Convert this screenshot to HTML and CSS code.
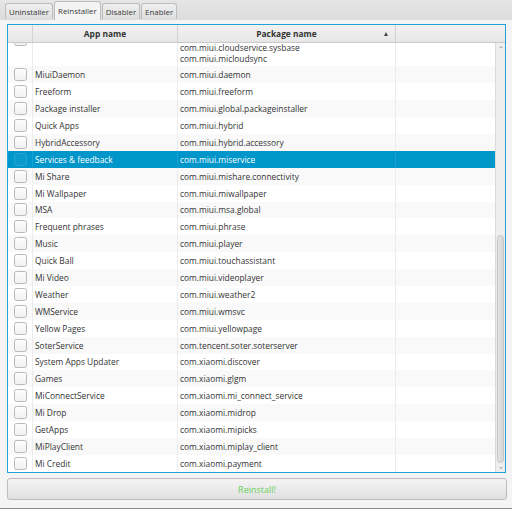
FILE: index.html
```html
<!DOCTYPE html>
<html lang="en">
<head>
<meta charset="utf-8">
<title>App Manager</title>
<link rel="stylesheet" href="styles.css">
</head>
<body>
<div class="tabbar">
  <div class="tab">Uninstaller</div>
  <div class="tab selected">Reinstaller</div>
  <div class="tab">Disabler</div>
  <div class="tab">Enabler</div>
</div>
<div class="content">
  <div class="table">
    <div class="thead">
      <div class="th"></div>
      <div class="th">App name</div>
      <div class="th sorted">Package name<span class="arrow"></span></div>
      <div class="th last"></div>
    </div>
    <div class="tbody">
      <div class="rows">
        <div class="row partial"><div class="cell chk"><span class="box"></span></div><div class="cell"></div><div class="cell pkg">com.miui.cloudservice.sysbase<br>com.miui.micloudsync</div><div class="cell"></div></div>
        <div class="row odd"><div class="cell chk"><span class="box"></span></div><div class="cell">MiuiDaemon</div><div class="cell">com.miui.daemon</div><div class="cell"></div></div>
        <div class="row"><div class="cell chk"><span class="box"></span></div><div class="cell">Freeform</div><div class="cell">com.miui.freeform</div><div class="cell"></div></div>
        <div class="row odd"><div class="cell chk"><span class="box"></span></div><div class="cell">Package installer</div><div class="cell">com.miui.global.packageinstaller</div><div class="cell"></div></div>
        <div class="row"><div class="cell chk"><span class="box"></span></div><div class="cell">Quick Apps</div><div class="cell">com.miui.hybrid</div><div class="cell"></div></div>
        <div class="row odd"><div class="cell chk"><span class="box"></span></div><div class="cell">HybridAccessory</div><div class="cell">com.miui.hybrid.accessory</div><div class="cell"></div></div>
        <div class="row selected"><div class="cell chk"><span class="box"></span></div><div class="cell">Services &amp; feedback</div><div class="cell">com.miui.miservice</div><div class="cell"></div></div>
        <div class="row odd"><div class="cell chk"><span class="box"></span></div><div class="cell">Mi Share</div><div class="cell">com.miui.mishare.connectivity</div><div class="cell"></div></div>
        <div class="row"><div class="cell chk"><span class="box"></span></div><div class="cell">Mi Wallpaper</div><div class="cell">com.miui.miwallpaper</div><div class="cell"></div></div>
        <div class="row odd"><div class="cell chk"><span class="box"></span></div><div class="cell">MSA</div><div class="cell">com.miui.msa.global</div><div class="cell"></div></div>
        <div class="row"><div class="cell chk"><span class="box"></span></div><div class="cell">Frequent phrases</div><div class="cell">com.miui.phrase</div><div class="cell"></div></div>
        <div class="row odd"><div class="cell chk"><span class="box"></span></div><div class="cell">Music</div><div class="cell">com.miui.player</div><div class="cell"></div></div>
        <div class="row"><div class="cell chk"><span class="box"></span></div><div class="cell">Quick Ball</div><div class="cell">com.miui.touchassistant</div><div class="cell"></div></div>
        <div class="row odd"><div class="cell chk"><span class="box"></span></div><div class="cell">Mi Video</div><div class="cell">com.miui.videoplayer</div><div class="cell"></div></div>
        <div class="row"><div class="cell chk"><span class="box"></span></div><div class="cell">Weather</div><div class="cell">com.miui.weather2</div><div class="cell"></div></div>
        <div class="row odd"><div class="cell chk"><span class="box"></span></div><div class="cell">WMService</div><div class="cell">com.miui.wmsvc</div><div class="cell"></div></div>
        <div class="row"><div class="cell chk"><span class="box"></span></div><div class="cell">Yellow Pages</div><div class="cell">com.miui.yellowpage</div><div class="cell"></div></div>
        <div class="row odd"><div class="cell chk"><span class="box"></span></div><div class="cell">SoterService</div><div class="cell">com.tencent.soter.soterserver</div><div class="cell"></div></div>
        <div class="row"><div class="cell chk"><span class="box"></span></div><div class="cell">System Apps Updater</div><div class="cell">com.xiaomi.discover</div><div class="cell"></div></div>
        <div class="row odd"><div class="cell chk"><span class="box"></span></div><div class="cell">Games</div><div class="cell">com.xiaomi.glgm</div><div class="cell"></div></div>
        <div class="row"><div class="cell chk"><span class="box"></span></div><div class="cell">MiConnectService</div><div class="cell">com.xiaomi.mi_connect_service</div><div class="cell"></div></div>
        <div class="row odd"><div class="cell chk"><span class="box"></span></div><div class="cell">Mi Drop</div><div class="cell">com.xiaomi.midrop</div><div class="cell"></div></div>
        <div class="row"><div class="cell chk"><span class="box"></span></div><div class="cell">GetApps</div><div class="cell">com.xiaomi.mipicks</div><div class="cell"></div></div>
        <div class="row odd"><div class="cell chk"><span class="box"></span></div><div class="cell">MiPlayClient</div><div class="cell">com.xiaomi.miplay_client</div><div class="cell"></div></div>
        <div class="row"><div class="cell chk"><span class="box"></span></div><div class="cell">Mi Credit</div><div class="cell">com.xiaomi.payment</div><div class="cell"></div></div>
      </div>
      <div class="vscroll">
        <span class="sarrow up"></span>
        <div class="track"><div class="thumb"></div></div>
        <span class="sarrow down"></span>
      </div>
    </div>
  </div>
  <button class="action">Reinstall!</button>
</div>
<div class="footer"></div>
</body>
</html>
```
FILE: styles.css
```css
html, body {
  margin: 0;
  padding: 0;
}

body {
  width: 512px;
  height: 509px;
  overflow: hidden;
  background: #f4f4f4;
  font-family: "Open Sans", "Noto Sans", sans-serif;
  font-size: 8.4px;
  color: #333;
  display: flex;
  flex-direction: column;
}

/* tab header */
.tabbar {
  height: 20px;
  flex: none;
  box-sizing: border-box;
  background: linear-gradient(#e6e6e6, #dcdcdc);
  display: flex;
  align-items: flex-end;
  gap: 1px;
  padding-left: 5px;
}

.tab {
  height: 16px;
  box-sizing: border-box;
  padding: 0 3px;
  display: flex;
  align-items: center;
  border: 1px solid #bdbdbd;
  border-bottom: none;
  border-radius: 3px 3px 0 0;
  background: linear-gradient(#efefef, #dedede);
  color: #3a3a3a;
  font-size: 7.9px;
  margin-bottom: 1px;
}

.tab.selected {
  height: 19px;
  margin-bottom: 0;
  background: #f4f4f4;
}

.content {
  flex: none;
  padding: 4px 6px 0 7px;
  display: flex;
  flex-direction: column;
}

/* table */
.table {
  width: 499px;
  height: 449px;
  box-sizing: border-box;
  border: 1px solid #1ea3d6;
  box-shadow: inset 0 0 0 1px #a9def3;
  background: #fff;
  display: flex;
  flex-direction: column;
  overflow: hidden;
}

.thead {
  height: 18px;
  flex: none;
  box-sizing: border-box;
  display: grid;
  grid-template-columns: 25px 145px 218px 1fr;
  background: linear-gradient(#f2f2f2, #e6e6e6);
  border-bottom: 1px solid #c9c9c9;
}

.th {
  border-right: 1px solid #d2d2d2;
  font-weight: bold;
  display: flex;
  align-items: center;
  justify-content: center;
  position: relative;
  color: #333;
}

.th.last {
  border-right: none;
}

.th .arrow {
  position: absolute;
  right: 7px;
  top: 7px;
  width: 0;
  height: 0;
  border-left: 2.5px solid transparent;
  border-right: 2.5px solid transparent;
  border-bottom: 4px solid #444;
}

.tbody {
  flex: 1;
  display: flex;
  min-height: 0;
}

.rows {
  flex: 1;
  overflow: hidden;
  display: flex;
  flex-direction: column;
}

.row {
  height: 16.9px;
  flex: none;
  display: grid;
  grid-template-columns: 25px 145px 218px 1fr;
  background: #fff;
}

.row.odd {
  background: #f9f9f9;
}

.row.selected {
  background: #0096c9;
  color: #fff;
}

.cell {
  border-right: 1px solid #ececec;
  display: flex;
  align-items: center;
  padding-left: 2px;
  white-space: nowrap;
  overflow: hidden;
}

.row.selected .cell {
  border-right-color: #1aa0cf;
}

.cell:last-child {
  border-right: none;
}

.cell.chk {
  padding-left: 6px;
  overflow: visible;
}

.box {
  width: 13px;
  height: 13px;
  box-sizing: border-box;
  border: 1px solid #b9b9b9;
  border-radius: 2.5px;
  background: linear-gradient(#fdfdfd, #f1f1f1);
}

.row.selected .box {
  border-color: #2aa5d2;
  background: #0a9acb;
}

/* first row is scrolled partly out of view */
.row.partial {
  height: 23.4px;
}

.row.partial .chk {
  align-items: flex-start;
}

.row.partial .box {
  margin-top: -10px;
}

.cell.pkg {
  align-items: flex-end;
  line-height: 11px;
  padding-bottom: 2px;
  white-space: normal;
}

/* vertical scrollbar */
.vscroll {
  width: 10px;
  flex: none;
  box-sizing: border-box;
  background: #eeeeee;
  border-left: 1px solid #dadada;
  display: flex;
  flex-direction: column;
  align-items: center;
}

.sarrow {
  flex: none;
  width: 0;
  height: 0;
  margin: 3px 0;
  border-left: 2.5px solid transparent;
  border-right: 2.5px solid transparent;
}

.sarrow.up {
  border-bottom: 2.5px solid #b3b3b3;
}

.sarrow.down {
  border-top: 2.5px solid #b3b3b3;
}

.track {
  flex: 1;
  width: 100%;
  display: flex;
  flex-direction: column;
  justify-content: flex-end;
  padding-bottom: 1px;
  box-sizing: border-box;
}

.thumb {
  height: 226px;
  margin: 0 1px;
  border-radius: 4px;
  border: 1px solid #c6c6c6;
  background: linear-gradient(90deg, #e3e3e3, #d6d6d6);
}

/* bottom action button */
.action {
  margin-top: 5px;
  width: 500px;
  height: 22px;
  border: 1px solid #bcbcbc;
  border-radius: 3px;
  background: linear-gradient(#f4f4f4, #e0e0e0);
  font-family: "Open Sans", "Noto Sans", sans-serif;
  font-size: 9px;
  color: #6ccf60;
  padding: 0;
}

.footer {
  margin-top: auto;
  height: 1px;
  background: #8b8b8b;
  flex: none;
}
```
